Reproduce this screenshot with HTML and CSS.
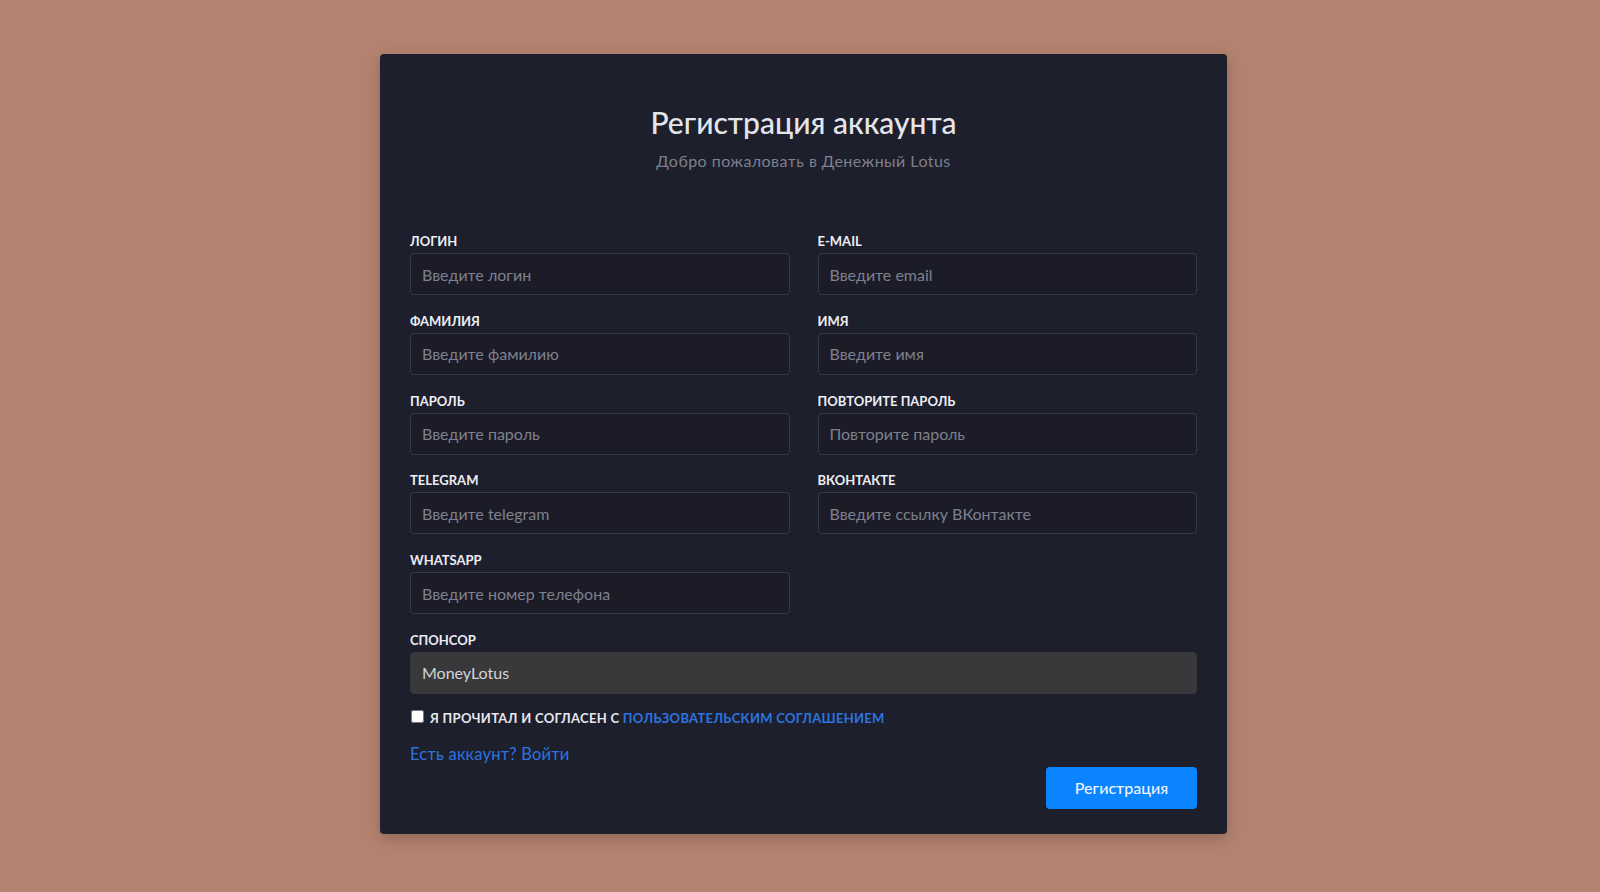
FILE: index.html
```html
<!DOCTYPE html>
<html lang="ru">
<head>
<meta charset="utf-8">
<title>Регистрация аккаунта</title>
<link rel="stylesheet" href="styles.css">
</head>
<body>
<div class="page">
  <form class="card">
    <h1 class="title">Регистрация аккаунта</h1>
    <p class="subtitle">Добро пожаловать в Денежный Lotus</p>
    <div class="grid">
      <div class="field">
        <label class="label">Логин</label>
        <input class="input" type="text" placeholder="Введите логин">
      </div>
      <div class="field">
        <label class="label">E-mail</label>
        <input class="input" type="text" placeholder="Введите email">
      </div>
      <div class="field">
        <label class="label">Фамилия</label>
        <input class="input" type="text" placeholder="Введите фамилию">
      </div>
      <div class="field">
        <label class="label">Имя</label>
        <input class="input" type="text" placeholder="Введите имя">
      </div>
      <div class="field">
        <label class="label">Пароль</label>
        <input class="input" type="password" placeholder="Введите пароль">
      </div>
      <div class="field">
        <label class="label">Повторите пароль</label>
        <input class="input" type="password" placeholder="Повторите пароль">
      </div>
      <div class="field">
        <label class="label">Telegram</label>
        <input class="input" type="text" placeholder="Введите telegram">
      </div>
      <div class="field">
        <label class="label">ВКонтакте</label>
        <input class="input" type="text" placeholder="Введите ссылку ВКонтакте">
      </div>
      <div class="field">
        <label class="label">WhatsApp</label>
        <input class="input" type="text" placeholder="Введите номер телефона">
      </div>
      <div class="field"></div>
      <div class="field wide">
        <label class="label">Спонсор</label>
        <input class="input sponsor" type="text" value="MoneyLotus" readonly>
      </div>
    </div>
    <label class="agree"><input type="checkbox" class="check"><span>Я прочитал и согласен с <a href="#" class="link">пользовательским соглашением</a></span></label>
    <a href="#" class="login-link">Есть аккаунт? Войти</a>
    <div class="actions">
      <button type="button" class="btn">Регистрация</button>
    </div>
  </form>
</div>
</body>
</html>
```

FILE: styles.css
```css
html, body {
  margin: 0;
  padding: 0;
}
body {
  background: #b4836f;
  font-family: "Lato", "Noto Sans", sans-serif;
  min-height: 892px;
}
.page {
  display: flex;
  justify-content: center;
  padding-top: 54px;
  padding-left: 7px;
}
.card {
  box-sizing: border-box;
  width: 847px;
  background: #1e1f2c;
  border-radius: 4px;
  padding: 50px 30px 25.5px 30px;
  box-shadow: 0 4px 14px rgba(0, 0, 0, 0.22);
}
.title {
  margin: 0;
  text-align: center;
  font-size: 30px;
  line-height: 36px;
  font-weight: 500;
  color: #e4e5ea;
}
.subtitle {
  margin: 11px 0 0 0;
  text-align: center;
  font-size: 16px;
  line-height: 20px;
  letter-spacing: 0.45px;
  color: #7d7f8e;
}
.grid {
  margin-top: 62px;
  display: grid;
  grid-template-columns: 1fr 1fr;
  column-gap: 28px;
}
.field {
  display: flex;
  flex-direction: column;
  margin-bottom: 17.75px;
}
.field.wide {
  grid-column: 1 / 3;
  margin-bottom: 14px;
}
.label {
  font-size: 13px;
  line-height: 16px;
  font-weight: 700;
  text-transform: uppercase;
  color: #eceef3;
  margin-bottom: 4px;
}
.input {
  box-sizing: border-box;
  height: 42px;
  width: 100%;
  background: #1b1c27;
  border: 1px solid #35374a;
  border-radius: 4px;
  padding: 0 11px;
  font-family: inherit;
  font-size: 16px;
  color: #d6d8e0;
  outline: none;
}
.input::placeholder {
  color: #7e808e;
}
.input.sponsor {
  background: #39393c;
  border-color: #39393c;
  color: #d2d3d8;
}
.agree {
  display: flex;
  align-items: center;
  font-size: 13px;
  line-height: 20px;
  font-weight: 700;
  letter-spacing: 0.3px;
  text-transform: uppercase;
  color: #e6e7ec;
}
.check {
  width: 13px;
  height: 13px;
  margin: 0 6px 3px 1px;
}
.link {
  color: #2b74e0;
  text-decoration: none;
}
.login-link {
  display: block;
  margin-top: 16px;
  width: max-content;
  font-size: 16.5px;
  line-height: 20px;
  letter-spacing: 0.2px;
  color: #2b74e0;
  text-decoration: none;
}
.actions {
  display: flex;
  justify-content: flex-end;
  margin-top: 3px;
}
.btn {
  width: 151px;
  height: 42px;
  border: none;
  border-radius: 4px;
  background: #0a84ff;
  color: #eef4ff;
  font-family: inherit;
  font-size: 16px;
  font-weight: 500;
}
```
